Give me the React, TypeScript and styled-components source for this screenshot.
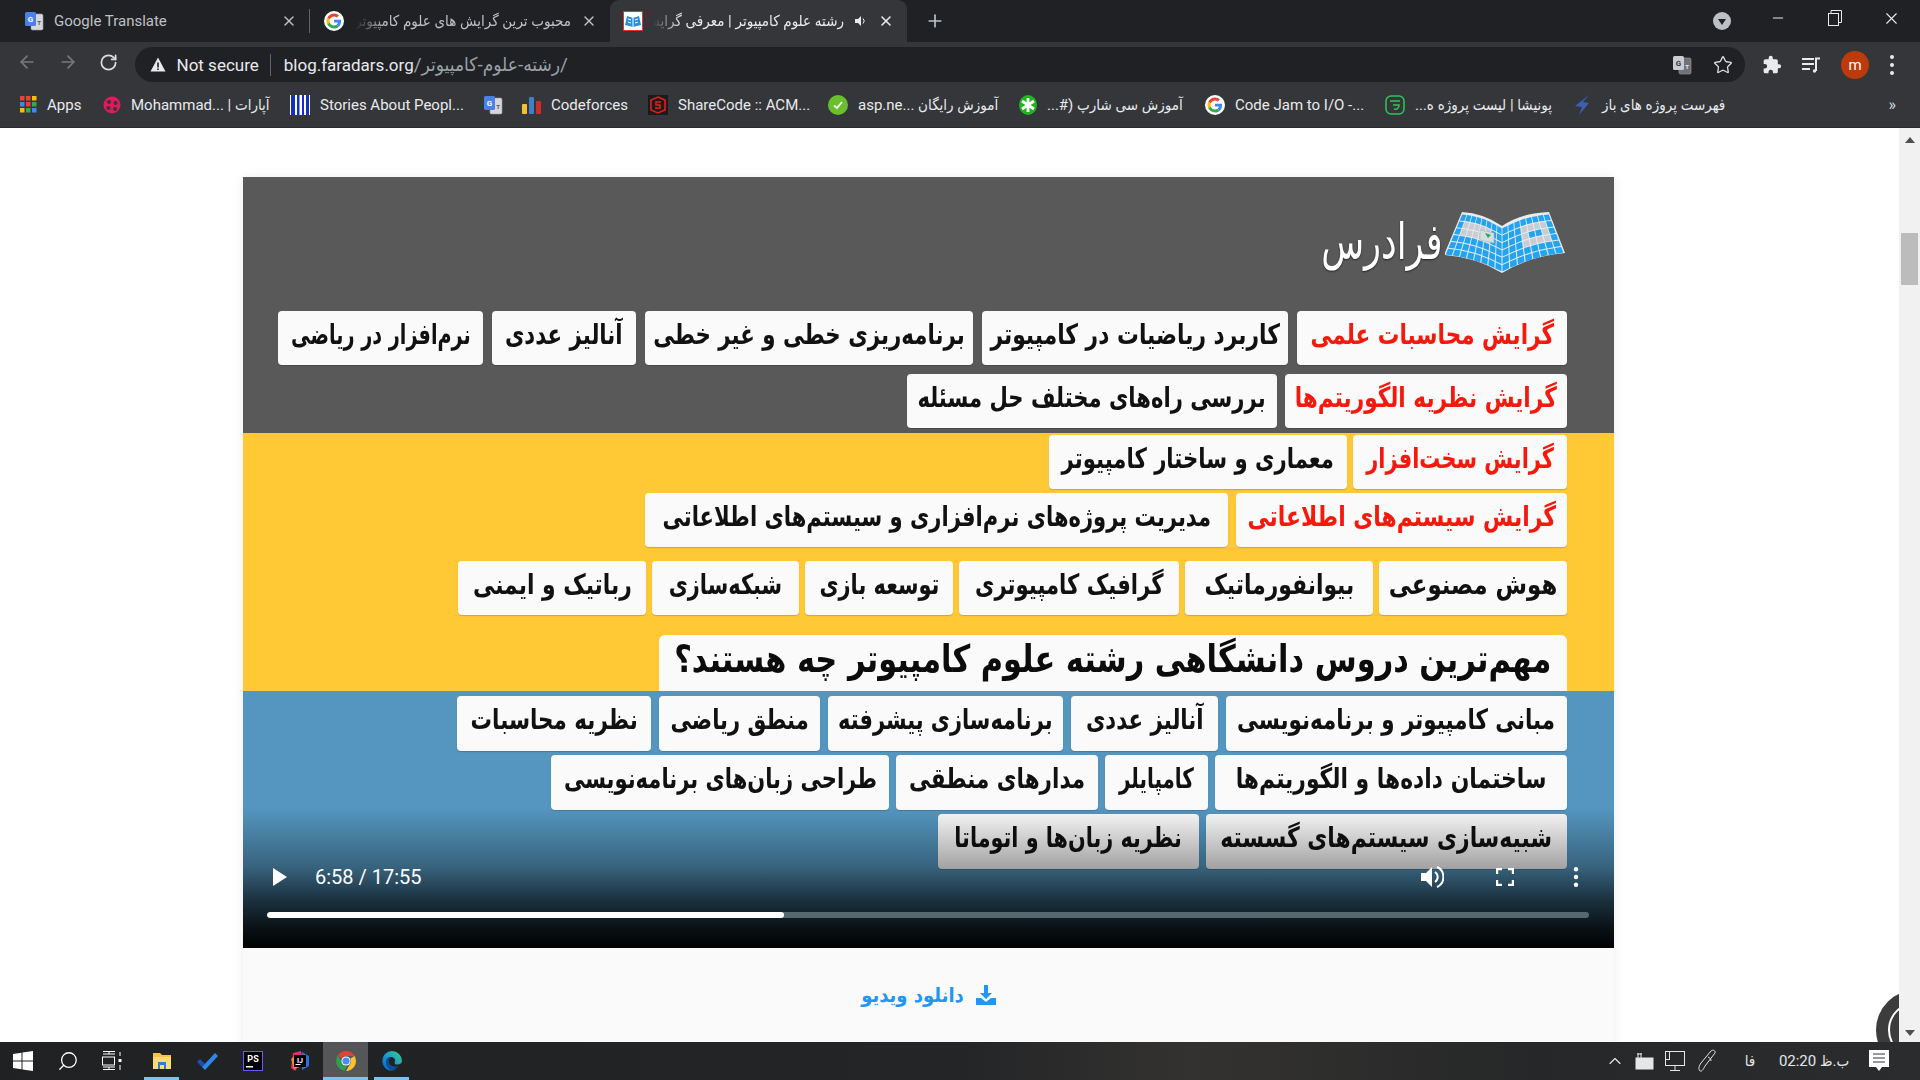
import React from "react";
import styled, { createGlobalStyle } from "styled-components";
import { ArrowLeft, ArrowRight, RotateCw, Star, X, Plus, Minus, Search, ChevronUp } from "lucide-react";

const UI_FONT = `Roboto, "DejaVu Sans Condensed", "DejaVu Sans", sans-serif`;
const FA_FONT = `"DejaVu Sans Condensed", "DejaVu Sans", sans-serif`;

const GlobalStyle = createGlobalStyle`
  html, body {
    margin: 0;
    padding: 0;
    height: 100%;
    overflow: hidden;
    background: #fff;
    font-family: ${UI_FONT};
  }
  * { box-sizing: border-box; }
`;

const Screen = styled.div`
  width: 1920px;
  height: 1080px;
  display: flex;
  flex-direction: column;
  overflow: hidden;
  position: relative;
`;

/* ---------- tab strip ---------- */
const TabStrip = styled.div`
  height: 42px;
  background: #202124;
  display: flex;
  align-items: stretch;
  flex-shrink: 0;
`;

const Tab = styled.div<{ $w: number; $pl: number; $active?: boolean }>`
  width: ${({ $w }) => $w}px;
  flex-shrink: 0;
  display: flex;
  align-items: center;
  padding: 0 13px 0 ${({ $pl }) => $pl}px;
  gap: 10px;
  border-radius: 9px 9px 0 0;
  background: ${({ $active }) => ($active ? "#35363a" : "transparent")};
  color: ${({ $active }) => ($active ? "#e8eaed" : "#bdc1c6")};
  font-size: 15px;
`;

const TabTitle = styled.div<{ $rtl?: boolean }>`
  flex: 1;
  min-width: 0;
  white-space: nowrap;
  overflow: hidden;
  direction: ${({ $rtl }) => ($rtl ? "rtl" : "ltr")};
  ${({ $rtl }) => $rtl && `mask-image: linear-gradient(to left, #000 85%, transparent 100%);`}
`;

const TabDivider = styled.div`
  width: 1px;
  height: 24px;
  background: #5f6368;
  align-self: center;
  flex-shrink: 0;
  margin-left: -1px;
`;

const NewTab = styled.div`
  width: 56px;
  display: flex;
  align-items: center;
  justify-content: center;
  color: #bdc1c6;
`;

const StripSpacer = styled.div`
  flex: 1;
`;

const MediaBadge = styled.div`
  width: 18px;
  height: 18px;
  border-radius: 50%;
  background: #bdc1c6;
  align-self: center;
  margin-right: 18px;
  display: flex;
  align-items: center;
  justify-content: center;
  &::after {
    content: "";
    border-left: 4px solid transparent;
    border-right: 4px solid transparent;
    border-top: 6px solid #202124;
    margin-top: 2px;
  }
`;

const WindowButton = styled.div`
  width: 57px;
  display: flex;
  align-items: center;
  justify-content: center;
  color: #e8eaed;
  padding-bottom: 6px;
`;

/* ---------- toolbar ---------- */
const Toolbar = styled.div`
  height: 40px;
  background: #35363a;
  display: flex;
  align-items: center;
  flex-shrink: 0;
  padding-left: 7px;
`;

const NavButton = styled.div<{ $off?: boolean }>`
  width: 40.5px;
  display: flex;
  justify-content: center;
  color: ${({ $off }) => ($off ? "#77797d" : "#dadce0")};
`;

const Omnibox = styled.div`
  width: 1610px;
  height: 35px;
  margin: 5px 0 0 6px;
  border-radius: 18px;
  background: #202124;
  display: flex;
  align-items: center;
  padding-left: 15px;
  font-size: 17px;
  color: #e8eaed;
`;

const NotSecure = styled.span`
  margin-left: 11px;
  padding-right: 11px;
  border-right: 1px solid #5f6368;
  line-height: 22px;
  white-space: nowrap;
`;

const Host = styled.span`
  margin-left: 13px;
  color: #e8eaed;
`;

const PathText = styled.span`
  color: #9aa0a6;
  font-size: 19px;
  white-space: nowrap;
`;

const OmniSpacer = styled.div`
  flex: 1;
`;

const OmniIcon = styled.div<{ $ml?: number }>`
  display: flex;
  margin-right: ${({ $ml }) => $ml ?? 0}px;
`;

const ToolIcons = styled.div`
  flex: 1;
  display: flex;
  align-items: center;
  justify-content: space-between;
  padding: 5px 25px 0 17px;
  color: #dadce0;
`;

const Avatar = styled.div`
  width: 28px;
  height: 28px;
  border-radius: 50%;
  background: #bd3a0b;
  color: #fff;
  font-size: 15px;
  display: flex;
  align-items: center;
  justify-content: center;
`;

/* ---------- bookmarks ---------- */
const BookmarkBar = styled.div`
  height: 46px;
  background: #35363a;
  display: flex;
  align-items: center;
  padding-left: 20px;
  flex-shrink: 0;
  border-bottom: 1px solid #2b2c2f;
`;

const Bookmark = styled.div<{ $w: number }>`
  width: ${({ $w }) => $w}px;
  flex-shrink: 0;
  display: flex;
  align-items: center;
  gap: 10px;
  font-size: 15px;
  color: #e8eaed;
  white-space: nowrap;
`;

const BookmarkEnd = styled.div`
  flex: 1;
  text-align: right;
  padding-right: 24px;
  font-size: 16px;
  color: #dadce0;
`;

/* ---------- page ---------- */
const Page = styled.div`
  flex: 1;
  min-height: 0;
  display: flex;
  background: #fff;
  position: relative;
  overflow: hidden;
`;

const Content = styled.div`
  flex: 1;
  padding: 49px 0 0 243px;
`;

const Card = styled.div`
  width: 1371px;
  height: 900px;
  background: #fafafa;
  box-shadow: 0 0 10px rgba(0, 0, 0, 0.08);
`;

const Video = styled.div`
  position: relative;
  height: 771px;
  overflow: hidden;
`;

const Section = styled.div<{ $bg: string; $pt: number; $pb: number }>`
  background: ${({ $bg }) => $bg};
  padding: ${({ $pt }) => $pt}px 47px ${({ $pb }) => $pb}px 0;
  display: flex;
  flex-direction: column;
`;

const Logo = styled.div`
  height: 61px;
  margin-bottom: 38px;
  display: flex;
  justify-content: flex-end;
  align-items: center;
  gap: 2px;
  margin-right: 2px;
`;

const LogoText = styled.span`
  font-family: ${FA_FONT};
  font-size: 50px;
  line-height: 61px;
  color: #fff;
  font-weight: 400;
  transform: scaleX(0.78);
  transform-origin: right center;
  text-shadow: 0 1px 2px rgba(0, 0, 0, 0.6);
`;

const ChipRow = styled.div<{ $gap: number; $mt?: number }>`
  direction: rtl;
  display: flex;
  gap: ${({ $gap }) => $gap}px;
  margin-top: ${({ $mt }) => $mt ?? 0}px;
`;

const Chip = styled.div<{ $w: number; $h?: number; $red?: boolean }>`
  width: ${({ $w }) => $w}px;
  height: ${({ $h }) => $h ?? 54}px;
  flex-shrink: 0;
  background: #fafafa;
  border-radius: 4px;
  box-shadow: 0 1px 1px rgba(0, 0, 0, 0.18);
  display: flex;
  align-items: center;
  justify-content: center;
  padding-bottom: 8px;
  font-family: ${FA_FONT};
  font-weight: 700;
  font-size: 28px;
  white-space: nowrap;
  color: ${({ $red }) => ($red ? "#f4190c" : "#111")};
`;

// DejaVu's Arabic runs wider than the font in the video frame
const ChipText = styled.span<{ $sx: number }>`
  display: inline-block;
  transform: scaleX(${({ $sx }) => $sx});
`;

const Heading = styled(Chip)`
  font-size: 38px;
  border-radius: 6px 6px 0 0;
  box-shadow: none;
  color: #0c0c0c;
`;

const Scrim = styled.div`
  position: absolute;
  left: 0;
  right: 0;
  bottom: 0;
  height: 140px;
  pointer-events: none;
  background: linear-gradient(
    to bottom,
    rgba(0, 0, 0, 0) 0%,
    rgba(0, 0, 0, 0.34) 42%,
    rgba(0, 0, 0, 0.68) 66%,
    rgba(0, 0, 0, 0.88) 85%,
    #000 100%
  );
`;

const Controls = styled.div`
  position: absolute;
  left: 24px;
  right: 25px;
  bottom: 30px;
  color: #fff;
`;

const ControlRow = styled.div`
  display: flex;
  align-items: center;
  height: 24px;
  margin-bottom: 23px;
`;

const PlayButton = styled.div`
  width: 0;
  height: 0;
  margin-left: 6px;
  border-left: 14px solid #fff;
  border-top: 9px solid transparent;
  border-bottom: 9px solid transparent;
`;

const Time = styled.div`
  margin-left: 28px;
  font-size: 20px;
  flex: 1;
`;

const ControlIcon = styled.div<{ $mr: number }>`
  display: flex;
  margin-right: ${({ $mr }) => $mr}px;
`;

const Track = styled.div`
  height: 6px;
  border-radius: 3px;
  background: #586871;
  overflow: hidden;
`;

const Played = styled.div`
  height: 100%;
  background: #fff;
  border-radius: 3px;
`;

const DownloadRow = styled.div`
  height: 94px;
  direction: rtl;
  display: flex;
  align-items: center;
  justify-content: center;
  gap: 12px;
  color: #2196f3;
  font-family: ${FA_FONT};
  font-weight: 700;
  font-size: 20px;
`;

const Scrollbar = styled.div`
  width: 21px;
  flex-shrink: 0;
  background: #f1f1f1;
  display: flex;
  flex-direction: column;
  align-items: center;
  position: relative;
  z-index: 2;
  padding: 9px 0 6px;
`;

const ScrollThumb = styled.div`
  width: 17px;
  height: 52px;
  background: #bcbcbc;
  margin: 90px 0 auto;
`;

const Arrow = styled.div<{ $down?: boolean }>`
  border-left: 5px solid transparent;
  border-right: 5px solid transparent;
  ${({ $down }) => ($down ? "border-top: 6px solid #505050;" : "border-bottom: 6px solid #505050;")}
`;

const HelpBubble = styled.div`
  position: absolute;
  left: 1876px;
  top: 862px;
  width: 80px;
  height: 80px;
  border-radius: 50%;
  background: #3c3c3c;
  &::after {
    content: "";
    position: absolute;
    inset: 12px;
    border-radius: 50%;
    border: 2px solid #fff;
  }
`;

/* ---------- taskbar ---------- */
const Taskbar = styled.div`
  height: 38px;
  flex-shrink: 0;
  background: linear-gradient(90deg, #1f2123 0%, #242527 50%, #333230 62%, #262728 80%, #2b2c2d 100%);
  display: flex;
  align-items: stretch;
  color: #fff;
`;

const TaskSlot = styled.div<{ $w: number; $ml?: number; $active?: boolean; $open?: boolean }>`
  width: ${({ $w }) => $w}px;
  margin-left: ${({ $ml }) => $ml ?? 0}px;
  flex-shrink: 0;
  display: flex;
  align-items: center;
  justify-content: center;
  background: ${({ $active }) => ($active ? "#555658" : "transparent")};
  border-bottom: 3px solid ${({ $open }) => ($open ? "#76c6f5" : "transparent")};
  border-top: 3px solid transparent;
`;

const TaskSpacer = styled.div`
  flex: 1;
`;

const TrayItem = styled.div<{ $w: number }>`
  width: ${({ $w }) => $w}px;
  flex-shrink: 0;
  display: flex;
  align-items: center;
  justify-content: center;
  font-size: 15px;
  white-space: nowrap;
  color: #e6e6e6;
`;

/* ---------- drawings ---------- */
const GoogleG = ({ size = 20 }: { size?: number }) => (
  <svg width={size} height={size} viewBox="0 0 48 48" style={{ flexShrink: 0 }}>
    <circle cx="24" cy="24" r="24" fill="#fff" />
    <g transform="translate(6 6) scale(.75)">
      <path fill="#EA4335" d="M24 9.5c3.5 0 6.7 1.3 9.1 3.5l6.8-6.8C35.8 2.4 30.2 0 24 0 14.6 0 6.5 5.4 2.6 13.2l7.9 6.1C12.4 13.7 17.700 9.500 24 9.500z" />
      <path fill="#4285F4" d="M46.500 24.500c0-1.600-.1-3.100-.4-4.500H24v9h12.700c-.6 2.900-2.200 5.400-4.700 7.100l7.600 5.900c4.400-4.100 6.900-10.100 6.900-17.500z" />
      <path fill="#FBBC05" d="M10.500 28.700c-.5-1.400-.8-3-.8-4.700s.3-3.200.8-4.700l-7.900-6.100C.9 16.500 0 20.100 0 24s.9 7.500 2.600 10.800l7.900-6.100z" />
      <path fill="#34A853" d="M24 48c6.500 0 11.900-2.100 15.900-5.800L32 36.100c-2.100 1.500-4.800 2.300-8 2.300-6.300 0-11.600-4.200-13.500-9.800l-7.900 6.100C6.500 42.600 14.600 48 24 48z" />
    </g>
  </svg>
);

const TranslateIcon = ({ mono }: { mono?: boolean }) => (
  <svg width="20" height="20" viewBox="0 0 20 20" style={{ flexShrink: 0 }}>
    <rect x="7" y="3" width="12" height="16" rx="1.500" fill={mono ? "#6f7276" : "#d5d7da"} stroke="#9a9da1" strokeWidth=".6" />
    <rect x="1" y="1" width="11" height="14" rx="1.500" fill={mono ? "#c9ccd0" : "#4a80e8"} />
    <text x="6.500" y="11" fontSize="8" fontWeight="700" textAnchor="middle" fill={mono ? "#35363a" : "#fff"} fontFamily="Roboto">G</text>
    <text x="15" y="14" fontSize="6" fontWeight="700" textAnchor="middle" fill={mono ? "#e8eaed" : "#555"} fontFamily="Roboto">T</text>
  </svg>
);

const FaradarsFavicon = () => (
  <svg width="20" height="20" viewBox="0 0 20 20" style={{ flexShrink: 0 }}>
    <rect x=".5" y=".5" width="19" height="19" fill="#fff" stroke="#e5322d" />
    <path d="M2 14 4 5l6 2 6-2 2 9-8 2z" fill="#2a8fdc" />
    <path d="M10 7v9M5 8l3 1M5 11l3 1M15 8l-3 1M15 11l-3 1" stroke="#fff" strokeWidth="1" />
  </svg>
);

const Speaker = () => (
  <svg width="14" height="14" viewBox="0 0 14 14" style={{ flexShrink: 0 }}>
    <path d="M1 5h3l3-3v10L4 9H1z" fill="#e8eaed" />
    <path d="M9 4.500a3.500 3.500 0 0 1 0 5" stroke="#e8eaed" fill="none" />
  </svg>
);

const RestoreIcon = () => (
  <svg width="14" height="16" viewBox="0 0 14 16" fill="none" stroke="#e8eaed" strokeWidth="1">
    <rect x=".5" y="3.500" width="10" height="12" />
    <path d="M3 3.500V.5h10.500v12h-3" />
  </svg>
);

const Warning = () => (
  <svg width="16" height="15" viewBox="0 0 16 15" style={{ flexShrink: 0 }}>
    <path d="M8 .5 15.500 14.500H.5z" fill="#e8eaed" />
    <path d="M7.200 5.500h1.600v5H7.200zM7.200 11.500h1.600v1.500H7.200z" fill="#202124" />
  </svg>
);

const PuzzleFilled = () => (
  <svg width="20" height="20" viewBox="0 0 24 24" fill="#e8eaed">
    <path d="M20.500 11H19V7a2 2 0 0 0-2-2h-4V3.500a2.500 2.500 0 0 0-5 0V5H4a2 2 0 0 0-2 2v3.800h1.500a2.700 2.700 0 0 1 0 5.400H2V20a2 2 0 0 0 2 2h3.800v-1.500a2.700 2.700 0 0 1 5.400 0V22H17a2 2 0 0 0 2-2v-4h1.500a2.500 2.500 0 0 0 0-5z" />
  </svg>
);

const Playlist = () => (
  <svg width="20" height="18" viewBox="0 0 20 18" fill="none" stroke="#e8eaed" strokeWidth="2">
    <path d="M1 3h12M1 8h12M1 13h8M15 15V2.500h4" />
    <circle cx="13.500" cy="15" r="1.700" fill="#e8eaed" stroke="none" />
  </svg>
);

const Dots = ({ color = "#e8eaed", h = 20, r = 2 }: { color?: string; h?: number; r?: number }) => (
  <svg width="6" height={h} viewBox={`0 0 6 ${h}`} fill={color}>
    <circle cx="3" cy={r} r={r} />
    <circle cx="3" cy={h / 2} r={r} />
    <circle cx="3" cy={h - r} r={r} />
  </svg>
);

const AppsGrid = () => (
  <svg width="17" height="17" viewBox="0 0 17 17" style={{ flexShrink: 0 }}>
    {["#ea4335", "#ea4335", "#fbbc05", "#4285f4", "#ea4335", "#34a853", "#fbbc05", "#34a853", "#4285f4"].map((c, i) => (
      <rect key={i} x={(i % 3) * 6} y={Math.floor(i / 3) * 6} width="4.500" height="4.500" fill={c} />
    ))}
  </svg>
);

const AparatIcon = () => (
  <svg width="18" height="20" viewBox="0 0 18 20" style={{ flexShrink: 0 }}>
    <circle cx="9" cy="10" r="8.500" fill="#df1a5c" />
    <circle cx="6" cy="7" r="2" fill="#35363a" />
    <circle cx="12.500" cy="8" r="2" fill="#35363a" />
    <circle cx="5.500" cy="13" r="2" fill="#35363a" />
    <circle cx="12" cy="14" r="2" fill="#35363a" />
  </svg>
);

const MediumIcon = () => (
  <svg width="20" height="20" viewBox="0 0 20 20" style={{ flexShrink: 0 }}>
    <rect width="20" height="20" fill="#fff" />
    <path d="M1 0h4v20H1zM7 0h2.500v20H7zM12 0h2v20h-2zM16 0h3v20h-3z" fill="#1230c9" />
  </svg>
);

const BarsIcon = () => (
  <svg width="19" height="18" viewBox="0 0 19 18" style={{ flexShrink: 0 }}>
    <rect x="0" y="8" width="5" height="10" rx="1" fill="#f5c02f" />
    <rect x="7" y="1" width="5" height="17" rx="1" fill="#3f7fc9" />
    <rect x="14" y="5" width="5" height="13" rx="1" fill="#c5302d" />
  </svg>
);

const ShareCodeIcon = () => (
  <svg width="20" height="20" viewBox="0 0 20 20" style={{ flexShrink: 0 }}>
    <rect width="20" height="20" fill="#1b1b1b" />
    <path d="M10 2 17 5v10l-7 3-7-3V5z" fill="none" stroke="#e02020" strokeWidth="1.600" />
    <path d="M13 7H8v3h4v3H7" fill="none" stroke="#e02020" strokeWidth="1.600" />
  </svg>
);

const CheckBadge = () => (
  <svg width="20" height="20" viewBox="0 0 20 20" style={{ flexShrink: 0 }}>
    <circle cx="10" cy="10" r="10" fill="#6abf2e" />
    <path d="M6 10.500 9 13l5-6" stroke="#fff" strokeWidth="1.800" fill="none" />
  </svg>
);

const GreenStar = () => (
  <svg width="18" height="20" viewBox="0 0 18 20" style={{ flexShrink: 0 }}>
    <ellipse cx="9" cy="10" rx="9" ry="10" fill="#21b321" />
    <path d="M9 3v14M3 6l12 8M15 6 3 14" stroke="#fff" strokeWidth="2.800" />
  </svg>
);

const PonishaIcon = () => (
  <svg width="20" height="20" viewBox="0 0 20 20" fill="none" stroke="#2fc45f" strokeWidth="1.500" style={{ flexShrink: 0 }}>
    <rect x="1" y="1" width="18" height="18" rx="5" />
    <path d="M5 6h10M8 10h6c0 3-2 5-5 4" />
  </svg>
);

const BoltIcon = () => (
  <svg width="18" height="20" viewBox="0 0 18 20" style={{ flexShrink: 0 }}>
    <path d="M15 0 9 7l6 1-10 12 3-8-7-1z" fill="#3a5fb3" />
  </svg>
);

const Book = () => {
  // cells of the open book, bilinear over each page
  const cols = 8;
  const rows = 6;
  const left = [[17, 2], [57, 16], [57, 60], [0, 43]];
  const right = [[57, 16], [104, 2], [119, 41], [57, 60]];
  const pick = (q: number[][], u: number, v: number) => {
    const bow = Math.sin(u * Math.PI) * 3;
    const x = (1 - v) * ((1 - u) * q[0][0] + u * q[1][0]) + v * ((1 - u) * q[3][0] + u * q[2][0]);
    const y = (1 - v) * ((1 - u) * q[0][1] + u * q[1][1]) + v * ((1 - u) * q[3][1] + u * q[2][1]);
    return `${x.toFixed(1)},${(y - bow).toFixed(1)}`;
  };
  const pale = (page: number, c: number, r: number) =>
    page === 0
      ? r >= 1 && r <= 2 && c >= 1 && c <= 5
      : (r >= 1 && r <= 3 && (c === 3 || c === 6)) || (r === 1 && c > 3 && c < 6) || (r === 3 && c > 3 && c < 6);
  const cells: React.ReactNode[] = [];
  [left, right].forEach((q, page) => {
    for (let c = 0; c < cols; c++) {
      for (let r = 0; r < rows; r++) {
        const g = 0.07;
        const u0 = (c + g) / cols;
        const u1 = (c + 1 - g) / cols;
        const v0 = (r + g) / rows;
        const v1 = (r + 1 - g) / rows;
        cells.push(
          <polygon
            key={`${page}-${c}-${r}`}
            points={`${pick(q, u0, v0)} ${pick(q, u1, v0)} ${pick(q, u1, v1)} ${pick(q, u0, v1)}`}
            fill={pale(page, c, r) ? "#c9cdd2" : "#24a4f0"}
          />
        );
      }
    }
  });
  return (
    <svg width="120" height="62" viewBox="0 0 120 62" style={{ flexShrink: 0 }}>
      <path d="M17 0Q38 1 57 14Q76 1 104 0L120 41Q85 44 57 61Q30 45 -1 43z" fill="#e9ecef" />
      {cells}
      <path d="M35 18l14 3v10l-14-3z" fill="#d8dde0" stroke="#9fb0b8" strokeWidth=".5" />
      <path d="M40 21l6 2-3 3z" fill="#28a36a" />
    </svg>
  );
};

const VolumeIcon = () => (
  <svg width="24" height="24" viewBox="0 0 24 24" fill="none">
    <path d="M1 8h5l6-6v20l-6-6H1z" fill="#fff" />
    <path d="M15 7a6 6 0 0 1 0 10" stroke="#fff" strokeWidth="2" />
    <path d="M17 2a11 11 0 0 1 0 20" stroke="#fff" strokeWidth="2" />
  </svg>
);

const FullscreenIcon = () => (
  <svg width="18" height="18" viewBox="0 0 18 18" fill="none" stroke="#fff" strokeWidth="2.400">
    <path d="M1 6V1h5M12 1h5v5M17 12v5h-5M6 17H1v-5" />
  </svg>
);

const DownloadIcon = () => (
  <svg width="20" height="20" viewBox="0 0 20 20" fill="#2196f3" style={{ flexShrink: 0 }}>
    <path d="M8 0h4v8h4l-6 6-6-6h4z" />
    <path d="M0 13h5l5 4 5-4h5v7H0z" />
  </svg>
);

const WinLogo = () => (
  <svg width="20" height="20" viewBox="0 0 20 20" fill="#fff">
    <path d="M0 3l8.500-1.200v7.700H0zM9.500 1.600 20 0v9.500H9.500zM0 10.500h8.500v7.700L0 17zM9.500 10.500H20V20L9.500 18.400z" />
  </svg>
);

const TaskViewIcon = () => (
  <svg width="20" height="20" viewBox="0 0 20 20" fill="none" stroke="#fff" strokeWidth="1">
    <path d="M1 .5h12M1 3h12M1 16h12M1 18.500h12M7 0v3M7 16v3" />
    <rect x=".5" y="6" width="12" height="8" />
    <path d="M18 1v4M18 14v5" />
    <rect x="16.500" y="8" width="3" height="3" fill="#fff" stroke="none" />
  </svg>
);

const FolderIcon = () => (
  <svg width="20" height="18" viewBox="0 0 20 18" style={{ flexShrink: 0 }}>
    <path d="M1 1h7l2 2h9v14H1z" fill="#f3c447" />
    <path d="M1 5h18v12H1z" fill="#fadb7a" />
    <path d="M6 10h8v7h-2v-4H8v4H6z" fill="#2a7fcf" />
  </svg>
);

const TodoIcon = () => (
  <svg width="21" height="17" viewBox="0 0 21 17" style={{ flexShrink: 0 }}>
    <path d="M0 9l3-3 5 5-3 3z" fill="#1c4fb0" />
    <path d="M5 14 18 0l3 3L8 17z" fill="#2f87e8" />
  </svg>
);

const PhpStormIcon = () => (
  <svg width="20" height="20" viewBox="0 0 20 20" style={{ flexShrink: 0 }}>
    <rect x=".5" y=".5" width="19" height="19" fill="#000" stroke="#6b57ff" />
    <text x="10" y="11" fontSize="9" fontWeight="700" fill="#fff" textAnchor="middle" fontFamily="Roboto">PS</text>
    <rect x="3" y="15" width="7" height="1.500" fill="#fff" />
  </svg>
);

const IdeaIcon = () => (
  <svg width="20" height="20" viewBox="0 0 20 20" style={{ flexShrink: 0 }}>
    <path d="M3 2l8-2 2 8-8 12-4-3z" fill="#e0306e" />
    <path d="M1 8l3 10 6-2-4-12z" fill="#f08a2c" />
    <path d="M12 1l7 4v10l-7 4z" fill="#2a6fe0" />
    <rect x="4" y="4" width="12" height="12" fill="#000" />
    <text x="10" y="11.500" fontSize="7" fontWeight="700" fill="#fff" textAnchor="middle" fontFamily="Roboto">IJ</text>
    <rect x="5.500" y="13" width="5" height="1" fill="#fff" />
  </svg>
);

const ChromeIcon = () => (
  <svg width="20" height="20" viewBox="0 0 20 20" style={{ flexShrink: 0 }}>
    <path d="M10 0a10 10 0 0 1 8.660 5H10a5 5 0 0 0-4.500 2.900L1.800 4.300A10 10 0 0 1 10 0z" fill="#db4437" />
    <path d="M18.660 5A10 10 0 0 1 10 20l4.300-7.500A5 5 0 0 0 14.300 7.500z" fill="#fbc02d" />
    <path d="M1.800 4.300l4 6.900A5 5 0 0 0 11 14.900L8.300 19.800A10 10 0 0 1 1.800 4.300z" fill="#2f9e52" />
    <circle cx="10" cy="10" r="4.600" fill="#fff" />
    <circle cx="10" cy="10" r="3.600" fill="#4a8af4" />
  </svg>
);

const EdgeIcon = () => (
  <svg width="20" height="20" viewBox="0 0 20 20" style={{ flexShrink: 0 }}>
    <defs>
      <linearGradient id="edgeGrad" x1="0" y1="1" x2="1" y2="0">
        <stop offset="0" stopColor="#0b5fb0" />
        <stop offset=".5" stopColor="#1a9ad8" />
        <stop offset="1" stopColor="#3fd16f" />
      </linearGradient>
    </defs>
    <path d="M10 0a10 10 0 0 1 10 10c0 2-2 3.500-4.500 3.500S12 12.500 13 10c.6-2-1.500-4-4-4-3.500 0-5 3-5 5 0 4 3 7 6.500 9A10 10 0 0 1 10 0z" fill="url(#edgeGrad)" />
    <path d="M4 11c0-2.500 2-4.500 5-4.500-2 1-2.500 3-2 5 .7 3 4 4.500 7 4 1 0 1.500-.2 2-.4a10 10 0 0 1-5.500 4.900C7 18 4 15 4 11z" fill="#0d4f9c" />
  </svg>
);

const BatteryIcon = () => (
  <svg width="20" height="20" viewBox="0 0 20 20" fill="none" stroke="#e6e6e6" strokeWidth="1">
    <rect x="1" y="7" width="17" height="11" fill="#e6e6e6" />
    <path d="M3 2v5M6 2v5M2 3h5" />
  </svg>
);

const NetworkIcon = () => (
  <svg width="22" height="22" viewBox="0 0 22 22" fill="none" stroke="#e6e6e6" strokeWidth="1">
    <rect x="1.500" y="1.500" width="19" height="14" />
    <path d="M11 15.500v5M6 20.500h10" />
    <rect x="1.500" y="1.500" width="4" height="8" fill="#2a2b2c" />
  </svg>
);

const PenIcon = () => (
  <svg width="22" height="24" viewBox="0 0 22 24" fill="none" stroke="#e6e6e6" strokeWidth="1">
    <path d="M3 22c-2-2-1-5 1-8L14 2c2-2 5 0 4 2L8 17c-1 2-3 6-5 5z" />
    <path d="M11 8c2 1 3 2 3 4" />
  </svg>
);

const NotificationIcon = () => (
  <svg width="20" height="22" viewBox="0 0 20 22" fill="#fff">
    <path d="M0 0h20v17h-7l-3 4-3-4H0z" />
    <path d="M4 4h12M4 8h12M4 12h12" stroke="#333" strokeWidth="1" />
  </svg>
);

/* ---------- data ---------- */
type ChipData = { t: string; w: number; sx: number; red?: boolean };
type RowData = { gap: number; mt?: number; chips: ChipData[] };

const grayRows: RowData[] = [
  {
    gap: 9,
    chips: [
      { t: "گرایش محاسبات علمی", w: 270, sx: 0.856, red: true },
      { t: "کاربرد ریاضیات در کامپیوتر", w: 306, sx: 0.866 },
      { t: "برنامه‌ریزی خطی و غیر خطی", w: 328, sx: 0.847 },
      { t: "آنالیز عددی", w: 144, sx: 0.844 },
      { t: "نرم‌افزار در ریاضی", w: 205, sx: 0.762 },
    ],
  },
  {
    gap: 8,
    mt: 9,
    chips: [
      { t: "گرایش نظریه الگوریتم‌ها", w: 282, sx: 0.858, red: true },
      { t: "بررسی راه‌های مختلف حل مسئله", w: 370, sx: 0.839 },
    ],
  },
];

const yellowRows: RowData[] = [
  {
    gap: 6,
    chips: [
      { t: "گرایش سخت‌افزار", w: 214, sx: 0.829, red: true },
      { t: "معماری و ساختار کامپیوتر", w: 298, sx: 0.842 },
    ],
  },
  {
    gap: 8,
    mt: 4,
    chips: [
      { t: "گرایش سیستم‌های اطلاعاتی", w: 331, sx: 0.868, red: true },
      { t: "مدیریت پروژه‌های نرم‌افزاری و سیستم‌های اطلاعاتی", w: 583, sx: 0.837 },
    ],
  },
  {
    gap: 6,
    mt: 14,
    chips: [
      { t: "هوش مصنوعی", w: 188, sx: 0.906 },
      { t: "بیوانفورماتیک", w: 188, sx: 0.868 },
      { t: "گرافیک کامپیوتری", w: 220, sx: 0.839 },
      { t: "توسعه بازی", w: 148, sx: 0.829 },
      { t: "شبکه‌سازی", w: 147, sx: 0.829 },
      { t: "رباتیک و ایمنی", w: 188, sx: 0.868 },
    ],
  },
];

const blueRows: RowData[] = [
  {
    gap: 8,
    chips: [
      { t: "مبانی کامپیوتر و برنامه‌نویسی", w: 341, sx: 0.85 },
      { t: "آنالیز عددی", w: 147, sx: 0.844 },
      { t: "برنامه‌سازی پیشرفته", w: 235, sx: 0.829 },
      { t: "منطق ریاضی", w: 161, sx: 0.837 },
      { t: "نظریه محاسبات", w: 194, sx: 0.852 },
    ],
  },
  {
    gap: 7,
    mt: 4,
    chips: [
      { t: "ساختمان داده‌ها و الگوریتم‌ها", w: 352, sx: 0.868 },
      { t: "کامپایلر", w: 103, sx: 0.79 },
      { t: "مدارهای منطقی", w: 202, sx: 0.855 },
      { t: "طراحی زبان‌های برنامه‌نویسی", w: 338, sx: 0.835 },
    ],
  },
  {
    gap: 7,
    mt: 4,
    chips: [
      { t: "شبیه‌سازی سیستم‌های گسسته", w: 361, sx: 0.868 },
      { t: "نظریه زبان‌ها و اتوماتا", w: 261, sx: 0.824 },
    ],
  },
];

const renderRows = (rows: RowData[], h?: number) =>
  rows.map((row, i) => (
    <ChipRow key={i} $gap={row.gap} $mt={row.mt}>
      {row.chips.map((c) => (
        <Chip key={c.t} $w={c.w} $h={h} $red={c.red}>
          <ChipText $sx={c.sx}>{c.t}</ChipText>
        </Chip>
      ))}
    </ChipRow>
  ));

const bookmarks: { w: number; icon: React.ReactNode; label?: string }[] = [
  { w: 83, icon: <AppsGrid />, label: "Apps" },
  { w: 187, icon: <AparatIcon />, label: "Mohammad... | آپارات" },
  { w: 193, icon: <MediumIcon />, label: "Stories About Peopl..." },
  { w: 39, icon: <TranslateIcon /> },
  { w: 126, icon: <BarsIcon />, label: "Codeforces" },
  { w: 180, icon: <ShareCodeIcon />, label: "ShareCode :: ACM..." },
  { w: 191, icon: <CheckBadge />, label: "asp.ne... آموزش رایگان" },
  { w: 186, icon: <GreenStar />, label: "آموزش سی شارپ (#..." },
  { w: 180, icon: <GoogleG size={20} />, label: "Code Jam to I/O -..." },
  { w: 189, icon: <PonishaIcon />, label: "پونیشا | لیست پروژه ه..." },
  { w: 170, icon: <BoltIcon />, label: "فهرست پروژه های باز" },
];

export default function App() {
  return (
    <Screen>
      <GlobalStyle />
      <TabStrip>
        <Tab $w={310} $pl={24}>
          <TranslateIcon />
          <TabTitle>Google Translate</TabTitle>
          <X size={16} strokeWidth={2} color="#bdc1c6" />
        </Tab>
        <TabDivider />
        <Tab $w={300} $pl={14}>
          <GoogleG />
          <TabTitle $rtl>محبوب ترین گرایش های علوم کامپیوتر در ایران</TabTitle>
          <X size={16} strokeWidth={2} color="#bdc1c6" />
        </Tab>
        <Tab $w={297} $pl={13} $active>
          <FaradarsFavicon />
          <TabTitle $rtl>رشته علوم کامپیوتر | معرفی گرایش ها و دروس</TabTitle>
          <Speaker />
          <X size={16} strokeWidth={2.4} color="#e8eaed" />
        </Tab>
        <NewTab>
          <Plus size={20} />
        </NewTab>
        <StripSpacer />
        <MediaBadge />
        <WindowButton>
          <Minus size={16} strokeWidth={1.6} />
        </WindowButton>
        <WindowButton>
          <RestoreIcon />
        </WindowButton>
        <WindowButton>
          <X size={19} strokeWidth={1.4} />
        </WindowButton>
      </TabStrip>

      <Toolbar>
        <NavButton $off>
          <ArrowLeft size={20} />
        </NavButton>
        <NavButton $off>
          <ArrowRight size={20} />
        </NavButton>
        <NavButton>
          <RotateCw size={19} strokeWidth={2.2} />
        </NavButton>
        <Omnibox>
          <Warning />
          <NotSecure>Not secure</NotSecure>
          <Host>blog.faradars.org</Host>
          <PathText>
            <bdi>/رشته-علوم-کامپیوتر/</bdi>
          </PathText>
          <OmniSpacer />
          <OmniIcon $ml={21}>
            <TranslateIcon mono />
          </OmniIcon>
          <OmniIcon $ml={12}>
            <Star size={20} color="#dadce0" strokeWidth={1.6} />
          </OmniIcon>
        </Omnibox>
        <ToolIcons>
          <PuzzleFilled />
          <Playlist />
          <Avatar>m</Avatar>
          <Dots />
        </ToolIcons>
      </Toolbar>

      <BookmarkBar>
        {bookmarks.map((b, i) => (
          <Bookmark key={i} $w={b.w}>
            {b.icon}
            {b.label && <span dir="auto">{b.label}</span>}
          </Bookmark>
        ))}
        <BookmarkEnd>»</BookmarkEnd>
      </BookmarkBar>

      <Page>
        <Content>
          <Card>
            <Video>
              <Section $bg="#595959" $pt={35} $pb={5}>
                <Logo>
                  <LogoText>فرادرس</LogoText>
                  <Book />
                </Logo>
                {renderRows(grayRows)}
              </Section>
              <Section $bg="#ffc835" $pt={2} $pb={0}>
                {renderRows(yellowRows)}
                <ChipRow $gap={0} $mt={20}>
                  <Heading $w={908} $h={56}>
                    <ChipText $sx={0.89}>مهم‌ترین دروس دانشگاهی رشته علوم کامپیوتر چه هستند؟</ChipText>
                  </Heading>
                </ChipRow>
              </Section>
              <Section $bg="#5496bf" $pt={5} $pb={79}>
                {renderRows(blueRows, 55)}
              </Section>
              <Scrim />
              <Controls>
                <ControlRow>
                  <PlayButton />
                  <Time>6:58 / 17:55</Time>
                  <ControlIcon $mr={52}>
                    <VolumeIcon />
                  </ControlIcon>
                  <ControlIcon $mr={59}>
                    <FullscreenIcon />
                  </ControlIcon>
                  <ControlIcon $mr={10}>
                    <Dots color="#fff" h={20} r={2.2} />
                  </ControlIcon>
                </ControlRow>
                <Track>
                  <Played style={{ width: `${(517 / 1322) * 100}%` }} />
                </Track>
              </Controls>
            </Video>
            <DownloadRow>
              <DownloadIcon />
              <span>دانلود ویدیو</span>
            </DownloadRow>
          </Card>
        </Content>
        <HelpBubble />
        <Scrollbar>
          <Arrow />
          <ScrollThumb />
          <Arrow $down />
        </Scrollbar>
      </Page>

      <Taskbar>
        <TaskSlot $w={45}>
          <WinLogo />
        </TaskSlot>
        <TaskSlot $w={45}>
          <Search size={22} strokeWidth={1.4} style={{ transform: "scaleX(-1)" }} />
        </TaskSlot>
        <TaskSlot $w={44}>
          <TaskViewIcon />
        </TaskSlot>
        <TaskSlot $w={35} $ml={10} $open>
          <FolderIcon />
        </TaskSlot>
        <TaskSlot $w={46} $ml={5}>
          <TodoIcon />
        </TaskSlot>
        <TaskSlot $w={46}>
          <PhpStormIcon />
        </TaskSlot>
        <TaskSlot $w={47}>
          <IdeaIcon />
        </TaskSlot>
        <TaskSlot $w={45} $active $open>
          <ChromeIcon />
        </TaskSlot>
        <TaskSlot $w={35} $ml={6} $open>
          <EdgeIcon />
        </TaskSlot>
        <TaskSpacer />
        <TrayItem $w={30}>
          <ChevronUp size={20} strokeWidth={1.4} />
        </TrayItem>
        <TrayItem $w={30}>
          <BatteryIcon />
        </TrayItem>
        <TrayItem $w={30}>
          <NetworkIcon />
        </TrayItem>
        <TrayItem $w={36}>
          <PenIcon />
        </TrayItem>
        <TrayItem $w={48}>فا</TrayItem>
        <TrayItem $w={80}>
          <span>02:20 ب.ظ</span>
        </TrayItem>
        <TrayItem $w={50}>
          <NotificationIcon />
        </TrayItem>
        <TrayItem $w={16} />
      </Taskbar>
    </Screen>
  );
}
